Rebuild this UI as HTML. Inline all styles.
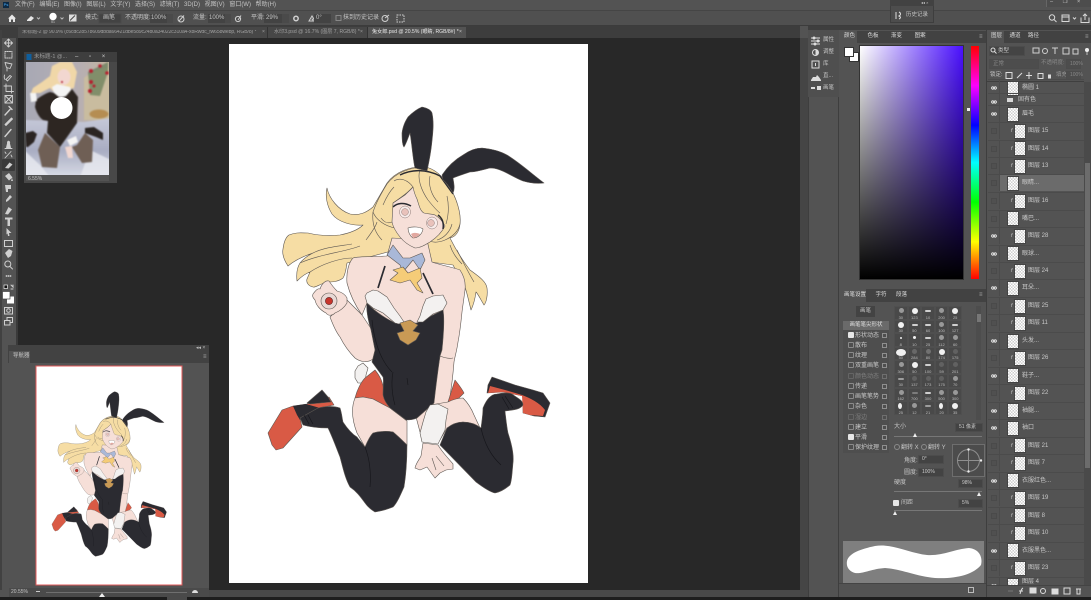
<!DOCTYPE html>
<html><head><meta charset="utf-8"><title>Photoshop</title>
<style>
html,body{margin:0;padding:0;width:1091px;height:600px;overflow:hidden;background:#535353}
body{font-family:"Liberation Sans","Noto Sans CJK SC",sans-serif;font-size:6px;color:#c4c4c4;position:relative}
.a{position:absolute;white-space:nowrap;line-height:1}
.b{position:absolute}
.r{position:absolute;left:988px;width:96px;height:17px;border-top:1px solid #4b4b4b;box-sizing:border-box}
.r .v{position:absolute;left:0;top:0;width:11px;height:16px;border-right:1px solid #4b4b4b}
.r .v.o::after{content:"";position:absolute;left:2.500px;top:6px;width:6px;height:4px;border-radius:50%;background:radial-gradient(circle,#eee 0 1px,#555 1.100px 1.500px,#ddd 1.600px)}
.r .v.n::after{content:"";position:absolute;left:3px;top:5px;width:4px;height:4px;background:#505050;border:1px solid #4a4a4a}
.t{position:absolute;top:1.500px;left:20px;width:10px;height:13px;background:repeating-conic-gradient(#cfcfcf 0 25%,#fff 0 50%) 0 0/3px 3px;outline:1px solid #444}
.c .t{left:27px}
.l{position:absolute;top:5px;left:34px;font-size:6px;color:#c8c8c8;white-space:nowrap;line-height:1}
.c .l{left:40px}
.f{position:absolute;left:23px;top:5px;font-size:5px;color:#ccc;font-style:italic}
.chk{position:absolute;width:4px;height:4px;border:1px solid #8a8a8a;border-radius:1px;box-sizing:content-box}
.chk.on{background:#e6e6e6;border-color:#e6e6e6}
.opt{position:absolute;left:855px;font-size:6px;color:#c9c9c9;line-height:1}
.lock{position:absolute;left:882px;width:3px;height:3px;border:1px solid #8f8f8f}
.grid{position:absolute;left:894px;top:306px;width:68px;display:grid;grid-template-columns:repeat(5,13.6px);grid-auto-rows:13.6px;background:#494949}
.grid div{position:relative;border:1px solid #4f4f4f;box-sizing:border-box;font-size:4px;text-align:center;color:#bdbdbd;line-height:4px;padding-top:8.5px}
.grid i{position:absolute;left:3px;top:1px;width:6px;height:6px;background:#f1f1f1;border-radius:50%}
.grid i.s{height:2px;top:3px;border-radius:1px;opacity:.8}
.grid i.d{background:#999;width:5px;height:5px;left:3.5px}
.box{position:absolute;background:#434343;border:1px solid #4c4c4c;box-sizing:border-box;font-size:5px;color:#ccc;line-height:7px;padding-left:3px}
svg{display:block}
</style></head><body>

<!-- Main canvas area -->
<div class="b" style="left:18px;top:38px;width:782px;height:552px;background:#282828"></div>
<div class="b" style="left:16px;top:30px;width:2px;height:560px;background:#3a3a3a"></div>
<div class="b" style="left:229px;top:44px;width:359px;height:539px;background:#fff"></div>

<!-- Navigator panel chrome -->
<div class="b" style="left:8px;top:345px;width:201px;height:245px;background:#535353"></div>
<div class="b" style="left:8px;top:345px;width:201px;height:18px;background:#424242"></div>
<div class="b" style="left:9px;top:351px;width:21px;height:12px;background:#535353"></div>

<!-- Character + toolbar artwork layer -->
<svg class="b" style="left:0;top:0" width="1091" height="600" viewBox="0 0 1091 600">
<g id="ch" stroke="#5e5853" stroke-width=".6" stroke-linejoin="round">
 <!-- back hair -->
 <path fill="#f6dda4" d="M327 188C329 198 338 210 350 214C360 216 367 212 373 207L387 183C395 172 410 166 425 167C440 170 452 188 457 203L460 222C460 232 455 237 450 238C455 248 462 260 470 270C478 276 486 281 487 288C488 296 486 303 484 305C481 300 478 294 476 292C475 299 473 306 471 310C469 302 467 293 465 287L453 265L430 262L395 250L347 263C346 270 345 275 343 278C338 282 332 282 327 282C320 284 315 288 313 287C308 286 306 282 307 279L310 272C304 274 299 279 297 281C296 272 298 266 300 263C304 258 309 255 313 253C304 256 295 260 288 266C284 260 282 254 283 249C284 241 286 237 289 235C296 232 302 233 308 233C320 236 330 236 340 235C350 233 358 230 363 225C352 226 338 222 332 214C327 206 325 196 327 188Z"/>
 <path fill="none" d="M313 253C325 247 340 246 352 244M300 263C320 254 345 252 360 246M310 272C322 264 340 258 352 258M373 212C372 222 374 232 382 240M366 240C372 232 376 226 377 222M457 250C463 262 468 272 474 282M450 245C452 252 456 258 462 264"/>
 <!-- left arm -->
 <path fill="#f6dfd8" d="M330 317C333 325 336 332 340 337C344 345 349 352 355 358C360 362 368 363 373 359L376 350L372 330L362 315L347 300Z"/>
 <!-- torso skin -->
 <path fill="#f6dfd8" d="M347 283C346 272 349 262 353 258C360 256 372 257 387 256L392 238L427 240L432 262C440 265 452 267 460 270C464 276 466 282 465 290C464 298 463 304 462 312C461 322 460 332 458 342C457 350 455 356 454 362C453 375 451 392 448 409L433 406C434 398 436 378 440 356C442 342 443 325 443 310L404 340L367 303L362 315C355 305 350 295 347 283Z"/>
 <path fill="none" d="M440 356C445 358 449 359 453 358"/>
 <!-- tail -->
 <path fill="#f3f1f0" d="M355 371L358 366L363 363L368 368L366 375L365 383L358 383L355 378Z"/>
 <!-- red shorts -->
 <path fill="#d95a45" d="M355 398C357 390 361 382 365 378L375 370C380 376 383 382 384 392L392 410L373 399L363 397Z"/>
 <path fill="#d95a45" d="M448 402L455 380C459 385 462 389 464 393L459 398Z"/>
 <!-- thighs -->
 <path fill="#f6dfd8" d="M355 398C351 408 352 420 357 433L365 447L374 433L393 432L407 445L407 421L390 408L373 399L363 397Z"/>
 <path fill="#f6dfd8" d="M448 402C452 400 458 398 463 398C468 403 472 410 474 415L481 430L463 422L447 428L440 440L420 432L415 413L430 405Z"/>
 <!-- bodysuit -->
 <path fill="#2b2b31" d="M367 303C375 312 385 318 395 323L403 323L417 323L443 310C445 320 443 340 442 350L440 356C438 370 436 385 434 403L417 418C413 420 409 420 406 420L390 408C386 403 384 400 383 395C383 385 384 380 383 377L372 362L375 350L371 330C368 320 366 310 367 303Z"/>
 <path fill="none" stroke="#16161a" d="M393 372C391 382 392 395 395 405M407 378L408 385M372 320C374 340 380 360 392 372"/>
 <!-- straps -->
 <path fill="none" stroke="#2b2b31" stroke-width="1.7" d="M385 266L378 288M423 273L433 294"/>
 <!-- fur -->
 <path fill="#f3f1f0" d="M365 296L367 293L373 290L378 291L387 297L394 308L400 316L404 322L399 324L395 323L383 313L373 308L367 303Z"/>
 <path fill="#f3f1f0" d="M417 322L420 316L423 306L426 299L433 296L443 295L447 303L443 310L433 314L423 322Z"/>
 <!-- heart -->
 <path fill="#c99a55" d="M400 323L410 320L418 325L413 331L420 333L416 340L408 345L400 340L397 333L404 331Z"/>
 <!-- left hand -->
 <path fill="#f6dfd8" d="M313 294C316 290 318 288 320 289C322 283 326 280 329 281C331 284 334 288 337 291C341 292 345 294 347 298L347 303C344 308 340 311 335 313C332 316 328 316 326 313C320 310 316 305 315 300C313 298 312 296 313 294Z"/>
 <circle cx="329" cy="301" r="8" fill="#e8d8d4"/>
 <circle cx="329" cy="301" r="3.600" fill="#c8352c" stroke="#5a2020"/>
 <!-- right shoe -->
 <path fill="#2b2b31" d="M492 377L515 385L533 390L543 393L550 403L545 417L534 416L523 413L523 396L503 392L487 393L488 385Z"/>
 <path fill="#d95a45" stroke="none" d="M490 386L505 390L522 395C530 398 540 403 545 410L543 416L530 415L523 413L522 396L503 392L488 393Z"/>
 <!-- left shoe -->
 <path fill="#d95a45" d="M268 433L272 445L276 450L283 448L302 427L300 418L318 408L334 405L329 397L307 404L293 406L282 410Z"/>
 <path fill="#2b2b31" d="M307 403L315 396L322 390L328 397L331 402L310 404Z"/>
 <path fill="#2b2b31" stroke="none" d="M293 406L306 404L320 408L300 420L297 415Z"/>
 <!-- right stocking -->
 <path fill="#2b2b31" d="M447 428C452 424 458 422 463 422C470 422 476 424 481 428C482 420 483 414 483 408C487 398 492 394 497 394C502 393 508 392 512 394C517 398 523 400 523 405C520 410 512 410 505 411C506 420 507 428 508 433C512 445 514 455 513 463C512 473 512 480 510 485C504 490 500 492 495 493C490 492 484 488 476 482L440 445Z"/>
 <path fill="none" stroke="#15151a" d="M481 428C484 442 490 455 501 465M505 396L513 408M502 397L509 409"/>
 <!-- left stocking -->
 <path fill="#2b2b31" d="M318 408C326 406 334 406 340 408C342 414 342 418 343 422C347 428 352 434 357 437C360 441 363 444 365 447C368 440 370 436 373 433C380 431 388 431 393 432C398 436 403 441 407 445C407 460 406 475 404 487C400 496 397 503 393 507C388 509 382 511 375 512C370 509 367 506 365 503C360 496 356 491 350 487C345 478 343 468 340 457C336 447 332 436 328 428C320 428 310 427 303 425L300 418Z"/>
 <path fill="none" stroke="#15151a" d="M365 447C370 460 371 475 370 487M304 415L309 424M308 415L313 424"/>
 <!-- lower hand -->
 <path fill="#f6dfd8" d="M423 443L438 445C442 452 448 458 453 464L453 469L446 470L440 473L435 478L432 474L427 467L420 470L415 468C416 463 419 460 421 456Z"/>
 <path fill="none" d="M432 458L436 470M436 456L444 466"/>
 <!-- wrist fur -->
 <path fill="#f3f1f0" d="M430 405L438 404L448 409L446 420L445 430L441 438L438 444L430 443L422 442L420 433L423 422L426 412Z"/>
 <!-- head hair mass -->
 <path fill="#f6dda4" d="M373 212C376 203 382 192 387 184C395 173 410 167 425 167C438 169 450 184 456 200C459 208 461 216 460 224C458 232 452 237 445 240C440 242 434 243 430 241L395 228C385 226 376 220 373 212Z"/>
 <!-- face -->
 <path fill="#f6dfd8" d="M393 203L405 195L413 187C414 192 416 197 417 199C419 205 420 211 424 213C428 214 432 214 435 215C440 218 443 222 445 226C442 232 436 238 430 242C425 245 420 248 415 248C410 246 404 242 400 237C396 232 393 227 392 222Z"/>
 <path fill="none" d="M413 187C408 180 400 177 394 181M420 170C417 178 421 190 428 200C432 205 436 210 440 213M430 176C428 186 432 196 438 202M383 205C386 198 389 192 394 187M447 196C449 205 449 214 446 224M392 222C388 224 384 222 381 218M437 240C444 238 450 232 452 224M413 187C408 193 400 198 393 203"/>
 <!-- hairband -->
 <path fill="none" stroke="#2b2b31" stroke-width="1.400" d="M400 175C410 170 425 168 440 176L453 194"/>
 <!-- rabbit ears -->
 <path fill="#2b2b31" d="M422 107C427 108 431 110 432 113C434 122 433 132 432 141C431 152 429 162 427 171L415 168C413 160 412 145 410 133C408 138 406 144 404 147C402 145 402 138 402 133C403 125 406 120 408 117C412 113 417 109 422 107Z"/>
 <path fill="#2b2b31" d="M442 175C448 166 456 159 463 155C470 150 476 148 482 148C492 149 500 151 507 155C520 163 532 174 544 183C536 184 530 183 523 181C515 178 508 173 500 170C495 168 492 168 490 168C482 170 476 172 470 172C464 174 458 176 453 178C454 184 455 189 453 193C450 188 447 183 443 180Z"/>
 <!-- eyes -->
 <g stroke="#8f7a76" stroke-width=".5">
 <ellipse cx="405" cy="212" rx="5.500" ry="6" fill="#f8ebe9"/>
 <circle cx="405" cy="212" r="3.400" fill="#e9c2bb"/>
 <ellipse cx="432" cy="223" rx="5.500" ry="6" fill="#f8ebe9"/>
 <circle cx="431" cy="223" r="3.400" fill="#e9c2bb"/>
 </g>
 <path fill="none" stroke="#2b2b31" stroke-width="1.500" d="M393 207C397 203 404 202 411 206M438 215C442 218 444 223 443 229"/>
 <path fill="#fff" d="M408 228C413 226 420 227 423 229C422 235 417 238 413 238C410 236 408 232 408 228Z"/>
 <path fill="#e2a8a0" stroke="none" d="M411 234C414 232 418 233 420 234C418 237 414 238 413 238Z"/>
 <!-- collar -->
 <path fill="#a9b8d8" d="M393 245L387 255L400 265L403 272L413 260L420 270L425 260L422 253L410 258L403 258Z"/>
 <!-- bow -->
 <path fill="#f5cc78" d="M393 270L403 267L408 273L420 268L422 278L417 283L423 293L417 290L410 280L400 283L390 280L398 273Z"/>
</g>

<!-- Navigator thumbnail -->
<rect x="36" y="366" width="146" height="219" fill="#fff" stroke="#e05a5a" stroke-width="1"/>
<use href="#ch" transform="translate(-57.1 348.1) scale(.4067)"/>

<!-- Reference photo window -->
<rect x="24" y="52" width="93" height="131" fill="#484848"/>
<rect x="24" y="52" width="93" height="10" fill="#3e3e3e"/>
<rect x="26.500" y="54" width="5" height="6" fill="#0f5f9e"/>
<defs>
 <linearGradient id="pg" x1="0" x2="1" y1="0" y2="0"><stop offset="0" stop-color="#a7a8b4"/><stop offset=".6" stop-color="#b5aeb4"/><stop offset="1" stop-color="#c4b59e"/></linearGradient>
 <linearGradient id="sv" x1="0" x2="0" y1="0" y2="1"><stop offset="0" stop-color="#c5c8d8"/><stop offset=".55" stop-color="#a9adc2"/><stop offset="1" stop-color="#d8dbe6"/></linearGradient>
 <clipPath id="pc"><rect x="26" y="62" width="83" height="113"/></clipPath>
</defs>
<g clip-path="url(#pc)"><g style="filter:blur(.7px)">
<rect x="24" y="60" width="87" height="117" fill="url(#pg)"/>
<path fill="#c9bc9f" d="M84 78C90 72 100 68 111 68V120H84Z"/>
<path fill="url(#sv)" d="M24 120L84 122L111 118V177H24Z"/>
<path fill="#e8eaf0" d="M24 150L40 165L50 177H24ZM90 150L111 160V177H80Z" opacity=".8"/>
<ellipse cx="99" cy="114" rx="9.500" ry="4.500" fill="#b58d52"/>
<path fill="#3a5f36" d="M88 72L108 62V72L100 96L90 95Z" opacity=".5"/>
<g fill="#b51f2e"><circle cx="91" cy="71" r="2"/><circle cx="100" cy="66" r="1.800"/><circle cx="107" cy="73" r="1.800"/><circle cx="91" cy="82" r="2"/><circle cx="90" cy="91" r="2"/><circle cx="94" cy="86" r="1.500"/></g>
<path fill="#f0d7a8" d="M60 62L52 66L50 76L42 82L33 88L31 93L40 93L50 88L54 92L74 88L77 72L72 62Z"/>
<ellipse cx="64" cy="77" rx="6.500" ry="8" fill="#f2d7d0"/>
<circle cx="62" cy="82" r="1" fill="#b21c2e"/>
<path fill="#f4f4f4" d="M52 87L57 84L70 87L72 93L64 97L55 96Z"/>
<path fill="#2d2622" d="M50 92C44 94 40 97 36 100L35 107C37 114 40 118 43 120L48 121L47 133L60 147L70 133L77 123L78 97L72 89L66 96L60 98L54 93Z"/>
<path fill="#f4f4f4" d="M30 93L36 93L37 101L31 102Z"/>
<path fill="#f4f4f4" d="M67 140L76 136L78 142L70 146Z"/>
<path fill="#6f5f55" d="M45 133L38 150L42 167L57 168L60 147ZM77 145L85 133L93 140L92 162L82 163L72 147Z"/>
<path fill="#f2d7d0" d="M65 147L72 146L73 158L68 158Z"/>
<path fill="#2a2422" d="M25 133L33 131L37 134L34 142L28 147L26 147ZM85 128L94 127L103 133L103 140L96 137L85 133Z"/>
</g></g>
<circle cx="61.500" cy="108" r="11" fill="#fff"/>
<rect x="26" y="175" width="83" height="6" fill="#535353"/>

<!-- Toolbar icons -->
<g fill="none" stroke="#cfcfcf" stroke-width=".9" stroke-linecap="round" stroke-linejoin="round">
 <path d="M8.500 39V47M4.500 43H12.500M7 40.500L8.500 39L10 40.500M7 45.500L8.500 47L10 45.500M6 41.500L4.500 43L6 44.500M11 41.500L12.500 43L11 44.500"/>
 <rect x="5" y="51.500" width="7" height="6.500" stroke-dasharray="1.200 1"/>
 <path d="M5 62.500L12 64L10 68.500L6.500 67.500ZM7 68V71"/>
 <path d="M6 79.500L10 75.500L11.500 76.500L7.500 81ZM4.500 75C4 77 4 78 5 79.500"/>
 <path d="M6 84V91.500H13.500M4 86H11.500V93"/>
 <rect x="5" y="95.500" width="7.500" height="7.500"/><path d="M5 95.500L12.500 103M12.500 95.500L5 103"/>
 <path d="M5 115L10 109.500M9 106.500L12 109.500" stroke-width="1.400"/>
 <path d="M5 124.500L11.500 118L12.500 119L6 125.500Z" fill="#cfcfcf"/>
 <path d="M5 136.500L11 129.500" stroke-width="1.400"/>
 <path d="M6.500 147.500H10.500L9.500 143.500C10.500 141 7 140 7.500 143.500ZM5 148.500H12" fill="#cfcfcf"/>
 <path d="M5 158L11 151.500M5 152L6 153.500M11 155L12 157"/>
</g>
<rect x="2" y="159" width="13" height="12" rx="1" fill="#3a3a3a"/>
<g fill="#cfcfcf">
 <path d="M5 168L9.500 162.500L12.500 164.500L8.500 168.500Z"/>
 <path d="M5 176L9 173L12.500 177.500L9 180.500ZM12 178L13 181L11 181Z"/>
 <path d="M5 185H11V189H8V192H6Z"/>
 <path d="M6 200L10 195L12 197L8 201L6 202Z"/>
 <path d="M5 214L8.500 207L12 209.500L8 214.500Z"/>
 <path d="M5 217.500H12.500V219.500H10V226H7.500V219.500H5Z"/>
 <path d="M6.500 228L11.500 233L9 233L9.500 236L8 236L7.500 233.500L6.500 234.500Z"/>
 <circle cx="6.500" cy="276" r=".9"/><circle cx="8.500" cy="276" r=".9"/><circle cx="10.500" cy="276" r=".9"/>
 <path d="M5 253L9 249L12.500 251L11 256L8 258Z"/>
</g>
<g fill="none" stroke="#cfcfcf" stroke-linecap="round">
 <rect x="4.500" y="240.500" width="8" height="6"/>
 <circle cx="7.800" cy="264" r="3"/><path d="M10 266.500L12.500 269"/>
 <rect x="4.500" y="307.500" width="8" height="6.500"/><circle cx="8.500" cy="310.500" r="1.800"/>
 <path d="M4.500 320.500H10V325H4.500ZM7 320V317.500H12.500V322.500H10"/>
 <path d="M11 285L13 287V285M11 289L13 289"/>
</g>
<rect x="4" y="285" width="3.500" height="3.500" fill="#111" stroke="#eee" stroke-width=".7"/>
<rect x="7" y="296.500" width="7" height="7" fill="#fff"/>
<rect x="2.500" y="291.500" width="7.500" height="7.500" fill="#fff" stroke="#444" stroke-width=".7"/>
</svg>

<!-- Navigator labels -->
<div class="a" style="left:13px;top:353.500px;color:#c8c8c8;font-size:5.500px">导航器</div>
<div class="a" style="left:196px;top:346px;font-size:5px;color:#bbb">◂◂ ×</div>
<div class="a" style="left:203px;top:354px;font-size:6px;color:#aaa">≡</div>

<!-- Menu bar -->
<div class="b" style="left:0;top:0;width:1091px;height:10px;background:#535353"></div>
<div class="b" style="left:3px;top:2px;width:6px;height:6px;background:#0d2a45;color:#4fb3ff;font-size:4px;line-height:6px;text-align:center">Ps</div>
<div class="a" style="left:15px;top:2px;word-spacing:3px;font-size:6px">文件(F) 编辑(E) 图像(I) 图层(L) 文字(Y) 选择(S) 滤镜(T) 3D(D) 视图(V) 窗口(W) 帮助(H)</div>

<!-- Options bar -->
<div class="b" style="left:0;top:10px;width:1091px;height:16px;background:#505050;border-top:1px solid #454545;border-bottom:1px solid #3c3c3c;box-sizing:border-box"></div>
<svg class="b" style="left:0;top:10px" width="890" height="16" viewBox="0 10 890 16">
 <path fill="#e6e6e6" d="M8 18.500L12 14.500L16 18.500H15V22H13V19.500H11V22H9V18.500Z"/>
 <path fill="#e6e6e6" d="M27 20L31 16L34 18L31 21H27Z"/>
 <path fill="none" stroke="#bbb" d="M37 17.500L38.500 19L40 17.500M60.500 17.500L62 19L63.500 17.500M117 17.500L118 18.500L119 17.500M169 17.500L170 18.500L171 17.500M226 17.500L227 18.500L228 17.500M285 17.500L286 18.500L287 17.500"/>
 <circle cx="53" cy="16.500" r="3.700" fill="#fff"/>
 <rect x="69" y="14.500" width="7.500" height="7" fill="#ddd"/><path stroke="#444" d="M70 20.500L75 15.500"/>
 <g fill="none" stroke="#d0d0d0"><circle cx="181" cy="19" r="3"/><path d="M179 21L184 15.500"/><circle cx="238" cy="19" r="2.600"/><path d="M241 15.500L238 20"/><circle cx="296" cy="18.500" r="2.200" stroke-width="1.500"/><path d="M309 21H315L312 16ZM313 21C313 20 312.500 19 311.500 19"/><circle cx="385" cy="18.500" r="3"/><path d="M385 18L389 15"/><rect x="397" y="15" width="7" height="7" stroke-dasharray="1.500 1"/></g>
 <rect x="99" y="14" width="22" height="9" fill="#434343" stroke="#4a4a4a"/>
 <rect x="150" y="14" width="17" height="9" fill="#434343"/><rect x="167" y="14" width="6" height="9" fill="#4a4a4a"/>
 <rect x="208" y="14" width="17" height="9" fill="#434343"/><rect x="225" y="14" width="6" height="9" fill="#4a4a4a"/>
 <rect x="264" y="14" width="18" height="9" fill="#434343"/><rect x="282" y="14" width="7" height="9" fill="#4a4a4a"/>
 <rect x="314" y="14" width="17" height="9" fill="#434343"/>
 <rect x="336" y="15.500" width="5" height="5" fill="none" stroke="#888"/>
</svg>
<div class="a" style="left:51px;top:21px;font-size:3.500px">51</div>
<div class="a" style="left:85px;top:15px">模式:</div>
<div class="a" style="left:103px;top:15px">画笔</div>
<div class="a" style="left:125px;top:15px">不透明度:</div>
<div class="a" style="left:151px;top:15px">100%</div>
<div class="a" style="left:193px;top:15px">流量:</div>
<div class="a" style="left:209px;top:15px">100%</div>
<div class="a" style="left:251px;top:15px">平滑:</div>
<div class="a" style="left:266px;top:15px">29%</div>
<div class="a" style="left:316px;top:15px">0°</div>
<div class="a" style="left:343px;top:15px">抹到历史记录</div>

<!-- Tabs -->
<div class="b" style="left:0;top:26px;width:800px;height:12px;background:#3d3d3d"></div>
<div class="b" style="left:18px;top:27px;width:249px;height:11px;background:#474747;border-right:1px solid #333"></div>
<div class="b" style="left:268px;top:27px;width:99px;height:11px;background:#474747;border-right:1px solid #333"></div>
<div class="b" style="left:368px;top:27px;width:98px;height:11px;background:#535353"></div>
<div class="a" style="left:22px;top:30px;width:238px;overflow:hidden;color:#a0a0a0;font-size:5.100px;letter-spacing:-.1px">未标题-2 @ 90.9% (c6cdc28578609dbda66421dbe589c24b0a34022c310a4-x8Rwdc_fw658webp, RGB/8) *</div>
<div class="a" style="left:262px;top:30px;color:#a0a0a0;font-size:5px">×</div>
<div class="a" style="left:274px;top:30px;color:#a0a0a0;font-size:5.100px">水印3.psd @ 16.7% (图层 7, RGB/8) *</div>
<div class="a" style="left:360px;top:30px;color:#a0a0a0;font-size:5px">×</div>
<div class="a" style="left:372px;top:30px;color:#e8e8e8;font-size:5.100px">兔女郎.psd @ 20.5% (眼睛, RGB/8#) *</div>
<div class="a" style="left:459px;top:30px;color:#ccc;font-size:5px">×</div>

<!-- Toolbar edge -->
<div class="b" style="left:0;top:30px;width:2px;height:560px;background:#414141"></div>

<!-- Photo window labels -->
<div class="a" style="left:34px;top:54.500px;color:#9c9c9c;font-size:5.500px">未标题-1 @...</div>
<div class="a" style="left:75px;top:54px;color:#ccc;font-size:6px;word-spacing:9px">– ▫ ×</div>
<div class="a" style="left:28px;top:176.500px;font-size:5px">6.55%</div>

<!-- Bottom -->
<div class="b" style="left:209px;top:590px;width:599px;height:7px;background:#484848"></div>
<div class="b" style="left:9px;top:588px;width:200px;height:9px;background:#4a4a4a"></div>
<div class="a" style="left:11px;top:590px;font-size:5px">20.55%</div>
<div class="b" style="left:36px;top:591px;width:4px;height:1px;background:#ccc"></div>
<div class="b" style="left:46px;top:592px;width:141px;height:1px;background:#6f6f6f"></div>
<div class="b" style="left:99px;top:593px;width:0;height:0;border-left:3px solid transparent;border-right:3px solid transparent;border-bottom:4px solid #eee"></div>
<div class="b" style="left:192px;top:590px;width:6px;height:3px;background:#ddd;border-radius:3px 3px 0 0"></div>
<div class="b" style="left:0;top:597px;width:1091px;height:3px;background:#1d1d1d"></div>
<div class="b" style="left:167px;top:597px;width:20px;height:3px;background:#4a4a4a"></div>
<div class="b" style="left:800px;top:38px;width:8px;height:552px;background:#454545"></div>

<!-- History floating panel -->
<div class="b" style="left:890px;top:0;width:44px;height:23px;background:#4d4d4d;border:1px solid #3e3e3e;box-sizing:border-box"></div>
<div class="b" style="left:890px;top:0;width:44px;height:6px;background:#424242"></div>
<div class="a" style="left:921px;top:1px;font-size:4px">◂◂ ×</div>
<svg class="b" style="left:894px;top:11px" width="9" height="9"><path d="M2 1V8M5 1C7 2 7 4 5 5C7 6 7 7 5 8" fill="none" stroke="#ddd"/></svg>
<div class="a" style="left:906px;top:13px;font-size:5.500px">历史记录</div>

<!-- Window buttons and right options -->
<div class="b" style="left:1046px;top:0;width:45px;height:7px;background:#4d4d4d;border-left:1px solid #666;box-sizing:border-box"></div>
<div class="a" style="left:1050px;top:0;font-size:5.500px;word-spacing:8px;color:#ccc">– ❐ ×</div>
<svg class="b" style="left:1045px;top:12px" width="46" height="13"><g fill="none" stroke="#d8d8d8"><circle cx="7" cy="5.500" r="2.700"/><path d="M9 7.500L11.500 10"/><rect x="17" y="3" width="7" height="6.500"/><path d="M17 5H24M28 5.500L29.500 7L31 5.500"/><path d="M36 5.500V10.500H44V5.500M40 8V2M38 4L40 2L42 4"/></g></svg>

<!-- Panel dock -->
<div class="b" style="left:808px;top:26px;width:283px;height:4px;background:#3e3e3e"></div>
<div class="b" style="left:808px;top:30px;width:31px;height:567px;background:#535353;border-left:1px solid #3e3e3e;border-right:1px solid #3e3e3e;box-sizing:border-box"></div>
<div class="b" style="left:808px;top:30px;width:31px;height:67px;background:#4f4f4f"></div>
<svg class="b" style="left:809px;top:34px" width="13" height="60"><g fill="none" stroke="#ddd"><path d="M2 4H11M2 7H11M2 10H11"/><circle cx="5" cy="4" r="1"/><circle cx="9" cy="7" r="1"/><circle cx="6" cy="10" r="1"/><circle cx="6.500" cy="18.500" r="3"/><rect x="3" y="27" width="7" height="7"/><path d="M6.500 29V32"/></g><path fill="#ddd" d="M6.500 15.500A3 3 0 0 1 6.500 21.500ZM2 46L4 43L7 43L8 41L10 43L12 46V47H2ZM2 53H6V55H2ZM8 52H12V56H8Z"/></svg>
<div class="a" style="left:823px;top:38px;font-size:5.500px">属性</div>
<div class="a" style="left:823px;top:50px;font-size:5.500px">调整</div>
<div class="a" style="left:823px;top:62px;font-size:5.500px">库</div>
<div class="a" style="left:823px;top:74px;font-size:5.500px">直...</div>
<div class="a" style="left:823px;top:85.500px;font-size:5.500px">画笔</div>

<!-- Color panel -->
<div class="b" style="left:839px;top:30px;width:147px;height:258px;background:#535353"></div>
<div class="b" style="left:840px;top:31px;width:146px;height:12px;background:#424242"></div>
<div class="b" style="left:840px;top:31px;width:17px;height:12px;background:#535353"></div>
<div class="a" style="left:844px;top:34px;font-size:5.500px;color:#ddd;word-spacing:11px">颜色 色板 渐变 图案</div>
<div class="a" style="left:979px;top:34px;font-size:6px;color:#aaa">≡</div>
<div class="b" style="left:849px;top:52px;width:8px;height:8px;background:#fff;border:1px solid #333"></div>
<div class="b" style="left:844px;top:47px;width:8px;height:8px;background:#fff;border:1px solid #333"></div>
<div class="b" style="left:860px;top:46px;width:103px;height:233px;background:linear-gradient(to bottom,rgba(0,0,0,0),#000),linear-gradient(to right,#fff,#4a10ff);outline:1px solid #333"></div>
<div class="b" style="left:971px;top:46px;width:8px;height:233px;background:linear-gradient(to bottom,#f00 0,#f0f 17%,#00f 34%,#0ff 50%,#0f0 67%,#ff0 84%,#f00 100%)"></div>
<div class="b" style="left:967px;top:108px;width:3px;height:3px;background:#eee"></div>

<!-- Brush settings -->
<div class="b" style="left:839px;top:288px;width:147px;height:309px;background:#535353"></div>
<div class="b" style="left:840px;top:289px;width:146px;height:13px;background:#424242"></div>
<div class="b" style="left:840px;top:289px;width:26px;height:13px;background:#535353"></div>
<div class="a" style="left:844px;top:292.500px;font-size:5.500px;color:#ddd;word-spacing:8px">画笔设置 字符 段落</div>
<div class="a" style="left:979px;top:292px;font-size:6px;color:#aaa">≡</div>
<div class="b" style="left:856px;top:306px;width:19px;height:11px;background:#434343;text-align:center;line-height:11px;font-size:5.500px">画笔</div>
<div class="b" style="left:843px;top:321px;width:46px;height:9px;background:#6a6a6a;text-align:center;line-height:9px;font-size:5.500px;color:#ddd">画笔笔尖形状</div>
<div class="b" style="left:843px;top:330px;width:46px;height:123px;background:#4e4e4e"></div>
<div class="chk on" style="left:848px;top:332px"></div><div class="opt" style="top:332.500px">形状动态</div><div class="lock" style="top:333px"></div>
<div class="chk" style="left:848px;top:342px"></div><div class="opt" style="top:342.500px">散布</div><div class="lock" style="top:343px"></div>
<div class="chk" style="left:848px;top:352px"></div><div class="opt" style="top:352.500px">纹理</div><div class="lock" style="top:353px"></div>
<div class="chk" style="left:848px;top:362px"></div><div class="opt" style="top:362.500px">双重画笔</div><div class="lock" style="top:363px"></div>
<div class="chk" style="left:848px;top:373px;opacity:.4"></div><div class="opt" style="top:373.500px;opacity:.4">颜色动态</div><div class="lock" style="top:374px;opacity:.5"></div>
<div class="chk" style="left:848px;top:383px"></div><div class="opt" style="top:383.500px">传递</div><div class="lock" style="top:384px"></div>
<div class="chk" style="left:848px;top:393px"></div><div class="opt" style="top:393.500px">画笔笔势</div><div class="lock" style="top:394px"></div>
<div class="chk" style="left:848px;top:403px"></div><div class="opt" style="top:403.500px">杂色</div><div class="lock" style="top:404px"></div>
<div class="chk" style="left:848px;top:414px;opacity:.4"></div><div class="opt" style="top:414.500px;opacity:.4">湿边</div><div class="lock" style="top:415px;opacity:.5"></div>
<div class="chk" style="left:848px;top:424px"></div><div class="opt" style="top:424.500px">建立</div><div class="lock" style="top:425px"></div>
<div class="chk on" style="left:848px;top:434px"></div><div class="opt" style="top:434.500px">平滑</div><div class="lock" style="top:435px"></div>
<div class="chk" style="left:848px;top:444px"></div><div class="opt" style="top:444.500px">保护纹理</div><div class="lock" style="top:445px"></div>

<div class="grid">
<div><i class="d"></i>30</div><div><i></i>123</div><div><i class="s"></i>10</div><div><i class="d"></i>200</div><div><i></i>25</div>
<div><i></i>30</div><div><i class="s"></i>50</div><div><i class="s"></i>60</div><div><i class="d"></i>100</div><div><i class="s"></i>127</div>
<div><i style="width:2px;height:2px;left:5px;top:3px"></i>8</div><div><i style="width:3px;height:3px;left:4.500px;top:2px"></i>10</div><div><i class="s"></i>25</div><div><i class="d"></i>112</div><div><i class="d"></i>60</div>
<div><i style="width:10px;height:7px;left:1px"></i>50</div><div><i class="d" style="opacity:.4"></i>284</div><div><i class="d" style="opacity:.5"></i>80</div><div><i></i>174</div><div><i class="d" style="opacity:.3"></i>175</div>
<div><i class="d"></i>306</div><div><i></i>50</div><div><i class="s"></i>100</div><div><i class="d" style="opacity:.3"></i>59</div><div><i class="d" style="opacity:.3"></i>201</div>
<div><i class="s" style="opacity:.5"></i>30</div><div><i class="d" style="opacity:.3"></i>137</div><div><i class="d" style="opacity:.3"></i>173</div><div><i class="d" style="opacity:.3"></i>175</div><div><i class="d"></i>70</div>
<div><i class="d"></i>162</div><div><i class="s" style="opacity:.3"></i>700</div><div><i class="s"></i>300</div><div><i class="d"></i>500</div><div><i class="d"></i>300</div>
<div><i style="width:4px"></i>25</div><div><i class="d"></i>12</div><div><i class="s" style="opacity:.5"></i>21</div><div><i style="width:4px"></i>20</div><div><i></i>35</div>
</div>
<div class="b" style="left:976px;top:306px;width:5px;height:114px;background:#4d4d4d"></div>
<div class="b" style="left:977px;top:314px;width:4px;height:8px;background:#777"></div>

<div class="a" style="left:894px;top:424px;font-size:6px">大小</div>
<div class="box" style="left:955px;top:423px;width:28px;height:9px">51 像素</div>
<div class="b" style="left:894px;top:436px;width:88px;height:1px;background:#777"></div>
<div class="b" style="left:913px;top:433px;width:0;height:0;border-left:2.500px solid transparent;border-right:2.500px solid transparent;border-bottom:4px solid #eee"></div>
<div class="chk" style="left:894px;top:444px;border-radius:50%"></div><div class="a" style="left:901px;top:445px">翻转 X</div>
<div class="chk" style="left:921px;top:444px;border-radius:50%"></div><div class="a" style="left:928px;top:445px">翻转 Y</div>
<div class="a" style="left:904px;top:458px;font-size:6px">角度:</div>
<div class="box" style="left:918px;top:455px;width:26px;height:9px">0°</div>
<div class="a" style="left:904px;top:470px;font-size:6px">圆度:</div>
<div class="box" style="left:918px;top:468px;width:26px;height:9px">100%</div>
<svg class="b" style="left:952px;top:444px" width="33" height="33"><rect x=".5" y=".5" width="32" height="32" fill="#4c4c4c" stroke="#6e6e6e"/><circle cx="16.500" cy="16.500" r="11" fill="none" stroke="#8f8f8f"/><path d="M16.500 5V28M5 16.500H28" stroke="#8f8f8f"/><circle cx="16.500" cy="5.500" r="1.200" fill="#eee"/><circle cx="16.500" cy="27.500" r="1.200" fill="#eee"/><circle cx="29" cy="16.500" r="1.200" fill="#eee"/></svg>
<div class="a" style="left:894px;top:480px;font-size:6px">硬度</div>
<div class="box" style="left:958px;top:479px;width:25px;height:9px">98%</div>
<div class="b" style="left:894px;top:491px;width:88px;height:1px;background:#777"></div>
<div class="b" style="left:977px;top:492px;width:0;height:0;border-left:2.500px solid transparent;border-right:2.500px solid transparent;border-bottom:4px solid #eee"></div>
<div class="chk on" style="left:893px;top:500px"></div><div class="a" style="left:901px;top:500px;font-size:6px">间距</div>
<div class="box" style="left:958px;top:499px;width:25px;height:9px">5%</div>
<div class="b" style="left:894px;top:510px;width:88px;height:1px;background:#777"></div>
<div class="b" style="left:893px;top:511px;width:0;height:0;border-left:2.500px solid transparent;border-right:2.500px solid transparent;border-bottom:4px solid #eee"></div>

<svg class="b" style="left:843px;top:541px" width="141" height="42" viewBox="0 0 141 42"><rect width="141" height="42" fill="#7f7f7f"/><path d="M4 20C6 12 18 8 32 5C48 2 66 12 84 14C100 15 112 8 126 7C136 8 140 16 138 24C130 34 112 38 92 37C72 35 58 28 42 27C28 28 20 33 12 32C6 30 3 26 4 20Z" fill="#fff"/></svg>
<div class="b" style="left:839px;top:583px;width:147px;height:14px;background:#535353;border-top:1px solid #444;box-sizing:border-box"></div>
<div class="b" style="left:968px;top:587px;width:4px;height:4px;border:1px solid #bbb"></div>

<!-- Layers panel -->
<div class="b" style="left:986px;top:30px;width:105px;height:567px;background:#535353;border-left:1px solid #3e3e3e;box-sizing:border-box"></div>
<div class="b" style="left:987px;top:31px;width:104px;height:12px;background:#424242"></div>
<div class="b" style="left:987px;top:31px;width:17px;height:12px;background:#535353"></div>
<div class="a" style="left:991px;top:34px;font-size:5.500px;color:#ddd;word-spacing:6px">图层 通道 路径</div>
<div class="a" style="left:1085px;top:34px;font-size:6px;color:#aaa">≡</div>
<div class="box" style="left:989px;top:46px;width:36px;height:10px;background:#444;line-height:8px;padding-left:8px;font-size:5.500px">类型</div>
<svg class="b" style="left:990px;top:47px" width="7" height="7"><circle cx="3" cy="3" r="2" fill="none" stroke="#ddd"/><path d="M4.500 4.500L6.500 6.500" stroke="#ddd"/></svg>
<svg class="b" style="left:1030px;top:46px" width="60" height="10"><g fill="none" stroke="#d0d0d0"><rect x="3" y="2" width="6" height="5"/><circle cx="15" cy="5" r="2.500"/><path d="M22 2H28M25 2V8M33 2H39V8H33ZM43 3H48V8H43Z"/></g><circle cx="57" cy="4" r="2" fill="#eee"/><rect x="56" y="6" width="2" height="3" fill="#888"/></svg>
<div class="box" style="left:989px;top:59px;width:50px;height:10px;background:#4d4d4d;color:#888;font-size:5.500px;line-height:8px">正常</div>
<div class="a" style="left:1041px;top:60.500px;color:#888;font-size:5.500px">不透明度:</div>
<div class="box" style="left:1066px;top:59px;width:15px;height:10px;background:#4d4d4d;color:#888;font-size:5px;line-height:8px">100%</div>
<div class="a" style="left:990px;top:72.500px;font-size:5.500px">锁定:</div>
<svg class="b" style="left:1004px;top:71px" width="47" height="9"><g fill="none" stroke="#ddd"><rect x="2" y="1.500" width="6" height="6"/><path d="M13 7L18 2M25 1V8M22 4.500H28M34 2.500H39V7.500H34Z"/></g><rect x="44" y="3.500" width="4" height="4" fill="#ddd"/></svg>
<div class="a" style="left:1056px;top:72.500px;color:#999;font-size:5.500px">填充:</div>
<div class="box" style="left:1066px;top:71px;width:15px;height:9px;background:#4d4d4d;color:#888;font-size:5px;line-height:7px">100%</div>
<div class="b" style="left:987px;top:81px;width:97px;height:1px;background:#3f3f3f"></div>

<div class="r" style="top:79px"><div class="v o"></div><div class="t" style="top:2px"></div><div class="l">椭圆 1</div></div>
<div class="r" style="top:93px;height:13px"><div class="v o" style="height:12px"></div><div class="b" style="left:19px;top:4px;width:6px;height:4px;background:#d8d8d8"></div><div class="l" style="left:30px;top:3px">固有色</div></div>
<div class="r" style="top:105px"><div class="v o"></div><div class="t"></div><div class="l">眉毛</div></div>
<div class="r c" style="top:122px"><div class="v n"></div><div class="f">f</div><div class="t"></div><div class="l">图层 15</div></div>
<div class="r c" style="top:139.500px"><div class="v n"></div><div class="f">f</div><div class="t"></div><div class="l">图层 14</div></div>
<div class="r c" style="top:157px"><div class="v n"></div><div class="f">f</div><div class="t"></div><div class="l">图层 13</div></div>
<div class="r" style="top:174px;background:#6b6b6b"><div class="v n" style="background:#535353"></div><div class="t"></div><div class="l">眼睛...</div></div>
<div class="r c" style="top:192px"><div class="v n"></div><div class="f">f</div><div class="t"></div><div class="l">图层 16</div></div>
<div class="r" style="top:209.500px"><div class="v n"></div><div class="t"></div><div class="l">嘴巴...</div></div>
<div class="r c" style="top:227px"><div class="v o"></div><div class="f">f</div><div class="t"></div><div class="l">图层 28</div></div>
<div class="r" style="top:244.500px"><div class="v o"></div><div class="t"></div><div class="l">眼球...</div></div>
<div class="r c" style="top:262px"><div class="v n"></div><div class="f">f</div><div class="t"></div><div class="l">图层 24</div></div>
<div class="r" style="top:279px"><div class="v o"></div><div class="t"></div><div class="l">耳朵...</div></div>
<div class="r c" style="top:297px"><div class="v n"></div><div class="f">f</div><div class="t"></div><div class="l">图层 25</div></div>
<div class="r c" style="top:314px"><div class="v n"></div><div class="f">f</div><div class="t"></div><div class="l">图层 11</div></div>
<div class="r" style="top:332px"><div class="v o"></div><div class="t"></div><div class="l">头发...</div></div>
<div class="r c" style="top:349px"><div class="v n"></div><div class="f">f</div><div class="t"></div><div class="l">图层 26</div></div>
<div class="r" style="top:366.500px"><div class="v o"></div><div class="t"></div><div class="l">鞋子...</div></div>
<div class="r c" style="top:384px"><div class="v n"></div><div class="f">f</div><div class="t"></div><div class="l">图层 22</div></div>
<div class="r" style="top:401.500px"><div class="v o"></div><div class="t"></div><div class="l">袖腿...</div></div>
<div class="r" style="top:419px"><div class="v o"></div><div class="t"></div><div class="l">袖口</div></div>
<div class="r c" style="top:436.500px"><div class="v n"></div><div class="f">f</div><div class="t"></div><div class="l">图层 21</div></div>
<div class="r c" style="top:454px"><div class="v n"></div><div class="f">f</div><div class="t"></div><div class="l">图层 7</div></div>
<div class="r" style="top:471.500px"><div class="v o"></div><div class="t"></div><div class="l">衣服红色...</div></div>
<div class="r c" style="top:489px"><div class="v n"></div><div class="f">f</div><div class="t"></div><div class="l">图层 19</div></div>
<div class="r c" style="top:506.500px"><div class="v n"></div><div class="f">f</div><div class="t"></div><div class="l">图层 8</div></div>
<div class="r c" style="top:524px"><div class="v n"></div><div class="f">f</div><div class="t"></div><div class="l">图层 10</div></div>
<div class="r" style="top:541.500px"><div class="v o"></div><div class="t"></div><div class="l">衣服黑色...</div></div>
<div class="r c" style="top:559px"><div class="v n"></div><div class="f">f</div><div class="t"></div><div class="l">图层 23</div></div>
<div class="r" style="top:576.500px;height:9px;overflow:hidden"><div class="v o"></div><div class="t"></div><div class="l" style="top:1px">图层 4</div></div>

<div class="b" style="left:1084px;top:82px;width:7px;height:505px;background:#4a4a4a"></div>
<div class="b" style="left:1085px;top:163px;width:5px;height:305px;background:#6c6c6c"></div>
<div class="b" style="left:987px;top:585px;width:104px;height:12px;background:#535353;border-top:1px solid #444;box-sizing:border-box"></div>
<svg class="b" style="left:1005px;top:586px" width="80" height="10"><g fill="none" stroke="#ddd"><path d="M3 5H8" stroke="#777"/><path d="M15 8C16 5 16 3 18 2M14 5H18"/><rect x="25" y="2" width="6" height="5" fill="#ddd"/><circle cx="38" cy="5" r="2.500"/><path d="M47 3H53V8H47ZM47 3H50" fill="#ddd"/><rect x="59" y="2" width="6" height="6"/><path d="M71 3H76M72 3V8H75V3"/></g></svg>
</body></html>
